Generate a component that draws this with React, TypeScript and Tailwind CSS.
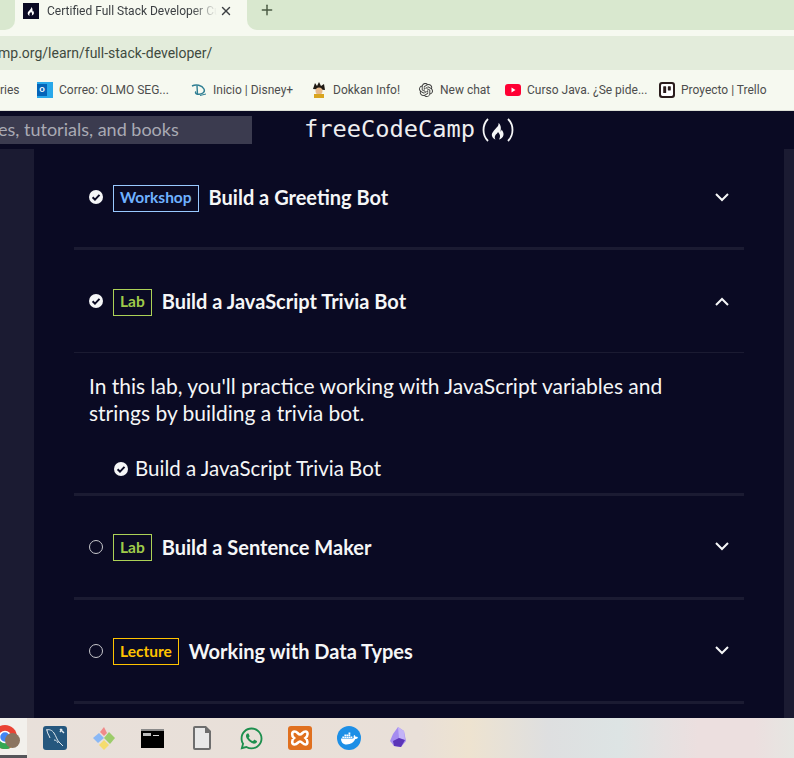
import { FaDocker, FaWhatsapp } from 'react-icons/fa'
import { SiOpenai, SiTrello } from 'react-icons/si'
import { X, Plus } from 'lucide-react'

const lato = "font-['Lato','Noto_Sans',sans-serif]"
const chrome = "font-['Roboto','Noto_Sans',sans-serif]"

function CheckCircle({ size = 14 }: { size?: number }) {
  return (
    <svg width={size} height={size} viewBox="0 0 14 14" className="shrink-0">
      <circle cx="7" cy="7" r="7" fill="#f5f6f7" />
      <path d="M3.6 7.2 6 9.6l4.5-4.7" fill="none" stroke="#0a0a23" strokeWidth="2" />
    </svg>
  )
}

function EmptyCircle() {
  return (
    <svg width="14" height="14" viewBox="0 0 14 14" className="shrink-0">
      <circle cx="7" cy="7" r="6.5" fill="none" stroke="#c8c8cc" strokeWidth="1" />
    </svg>
  )
}

function Chevron({ up }: { up?: boolean }) {
  return (
    <svg width="14" height="9" viewBox="0 0 14 9" className="shrink-0">
      <path d={up ? 'M1 8 7 2l6 6' : 'M1 1l6 6 6-6'} fill="none" stroke="#f5f6f7" strokeWidth="2" />
    </svg>
  )
}

function Badge({ label, tone }: { label: string; tone: 'blue' | 'green' | 'yellow' }) {
  const tones = {
    blue: 'border-[#99c9ff] text-[#6fb1ff]',
    green: 'border-[#acd157] text-[#9fcb4a]',
    yellow: 'border-[#ffc300] text-[#ffc300]',
  }
  return (
    <span className={`mt-[2px] flex h-[27px] items-center border px-[6px] text-[15.5px] font-bold ${tones[tone]}`}>
      {label}
    </span>
  )
}

function Row({
  title,
  label,
  tone,
  done,
  up,
  className,
}: {
  title: string
  label: string
  tone: 'blue' | 'green' | 'yellow'
  done?: boolean
  up?: boolean
  className: string
}) {
  return (
    <div className={`flex items-center px-[15px] ${className}`}>
      {done ? <CheckCircle /> : <EmptyCircle />}
      <span className="ml-[10px]">
        <Badge label={label} tone={tone} />
      </span>
      <span className="ml-[10px] text-[20px] font-bold text-[#f5f6f7]">{title}</span>
      <span className="ml-auto flex">
        <Chevron up={up} />
      </span>
    </div>
  )
}

function Bookmark({ icon, text, width }: { icon: React.ReactNode; text: string; width: string }) {
  return (
    <div className={`flex shrink-0 items-center gap-[6px] ${width}`}>
      <span className="flex h-4 w-4 shrink-0 items-center justify-center">{icon}</span>
      <span className="whitespace-nowrap text-[12px] text-[#4d4d4d]">{text}</span>
    </div>
  )
}

function Divider() {
  return <div className="h-[3px] bg-[#1b1b32]" />
}

const flamePath =
  'M7.500 0C8 3 5.500 4.500 3 7.500 1 10 .5 11 1 13c.5 2 2 3 3.500 3.500-1-1.500-1-3 0-4.500.8-1 1.800-1.500 2.500-3 1 1.200 2 2.500 2 4 0 1.500-.5 2.500-1 3.500 2-.5 4-2 4.500-4.500.3-2-.7-4-2-5.500 0 1-.4 1.800-1 2.200C10.500 4 9.500 1.500 7.500 0z'

function Flame({ className }: { className?: string }) {
  return (
    <svg viewBox="0 0 14 17" className={className} fill="currentColor">
      <path d={flamePath} />
    </svg>
  )
}

function LogoMark() {
  return (
    <svg viewBox="0 0 42 24" className="h-[24px] w-[42px] shrink-0 text-[#f5f6f7]" fill="none">
      <path d="M13 1C7 7 7 17 13 23" stroke="currentColor" strokeWidth="1.800" />
      <path d="M33 1c6 6 6 16 0 22" stroke="currentColor" strokeWidth="1.800" />
      <path transform="translate(16 5)" fill="currentColor" d={flamePath} />
    </svg>
  )
}

export default function App() {
  return (
    <div className="flex h-[758px] w-[794px] flex-col overflow-hidden bg-[#0a0a23]">
      {/* tab strip */}
      <div className={`flex h-[30px] shrink-0 bg-[#f6f9f0] ${chrome}`}>
        <div className="w-[15px] shrink-0 rounded-br-[10px] bg-[#d9e8cf]" />
        <div className="flex w-[232px] shrink-0 items-center pb-[8px] pl-[8px]">
          <span className="flex h-4 w-4 shrink-0 items-center justify-center bg-[#0a0a23] text-white">
            <Flame className="h-[9px] w-[8px]" />
          </span>
          <span className="ml-[8px] w-[170px] overflow-hidden whitespace-nowrap text-[12px] text-[#3c4043] [mask-image:linear-gradient(to_right,black_85%,transparent)]">
            Certified Full Stack Developer Curriculum
          </span>
          <X size={14} strokeWidth={2.4} className="ml-[2px] text-[#3c4043]" />
        </div>
        <div className="flex flex-1 rounded-bl-[10px] bg-[#d9e8cf]">
          <Plus size={16} strokeWidth={2.2} className="ml-[12px] mt-[2px] text-[#4a5a44]" />
        </div>
      </div>

      {/* address bar */}
      <div className="flex h-[40px] shrink-0 items-end bg-[#f6f9f0]">
        <div className={`flex h-[34px] w-full items-center overflow-hidden bg-[#e3ecdb] ${chrome}`}>
          <span className="ml-[-2px] whitespace-nowrap text-[14px] text-[#3f4a3f]">mp.org/learn/full-stack-developer/</span>
        </div>
      </div>

      {/* bookmarks */}
      <div className={`flex h-[41px] shrink-0 items-center border-b border-[#dcdfd6] bg-[#f6f9f0] ${chrome}`}>
        <span className="w-[37px] shrink-0 whitespace-nowrap text-[12px] text-[#4d4d4d]">ries</span>
        <Bookmark
          width="w-[154px]"
          text="Correo: OLMO SEG..."
          icon={
            <span className="flex h-4 w-4 items-center justify-start bg-[#28a8ea]">
              <span className="flex h-3 w-[10px] items-center justify-center bg-[#0364b8] text-[8px] font-bold text-white">O</span>
            </span>
          }
        />
        <Bookmark
          width="w-[120px]"
          text="Inicio | Disney+"
          icon={
            <svg viewBox="0 0 16 16" className="h-4 w-4" fill="none" stroke="#2f7f93" strokeWidth="1.4">
              <path d="M1 4c4-2 10-1 12 3 1.500 3-2 6-7 5-1.500-.3-2-1.500-1-2.500" />
              <path d="M6 3.500 6.500 13" />
              <path d="M9 13.500 15 12" strokeWidth="1" />
            </svg>
          }
        />
        <Bookmark
          width="w-[107px]"
          text="Dokkan Info!"
          icon={
            <svg viewBox="0 0 16 16" className="h-4 w-4">
              <path d="M2 7 4 1l2 3 2-4 2 4 3-2 1 6z" fill="#1f1a14" />
              <circle cx="8" cy="9" r="3.500" fill="#e7b98c" />
              <rect x="3" y="12" width="10" height="4" fill="#d9a520" />
            </svg>
          }
        />
        <Bookmark width="w-[87px]" text="New chat" icon={<SiOpenai size={14} className="text-[#3a3a3a]" />} />
        <Bookmark
          width="w-[154px]"
          text="Curso Java. ¿Se pide..."
          icon={
            <svg viewBox="0 0 16 12" className="w-4">
              <rect width="16" height="12" rx="3" fill="#ff0033" />
              <path d="M6.500 3.500v5l4-2.500z" fill="#fff" />
            </svg>
          }
        />
        <Bookmark
          width="w-[110px]"
          text="Proyecto | Trello"
          icon={
            <span className="flex h-4 w-4 items-center justify-center rounded-[3px] bg-[#2b1d1d]">
              <SiTrello size={12} className="text-white" />
            </span>
          }
        />
      </div>

      {/* site nav */}
      <div className={`flex h-[38px] shrink-0 items-center ${lato}`}>
        <div className="flex h-[28px] w-[252px] shrink-0 items-center overflow-hidden bg-[#3b3b4f] pb-[2px]">
          <span className="ml-[-2px] whitespace-nowrap text-[18px] text-[#a9aab4]">es, tutorials, and books</span>
        </div>
        <div className="ml-[52px] flex items-center font-['DejaVu_Sans_Mono',monospace] text-[23.700px] leading-none text-[#eeeef0]">
          freeCodeCamp
          <LogoMark />
        </div>
      </div>

      {/* page */}
      <div className={`flex min-h-0 flex-1 overflow-hidden ${lato}`}>
        <div className="w-[34px] shrink-0 bg-[#1b1b32]" />
        <div className="min-w-0 flex-1 bg-[#0a0a23] px-[40px]">
          <Row title="Build a Greeting Bot" label="Workshop" tone="blue" done className="h-[98px] pb-[2px]" />
          <Divider />
          <Row title="Build a JavaScript Trivia Bot" label="Lab" tone="green" done up className="h-[103px] border-b border-[#1b1b32]" />
          <div className="h-[140px] px-[15px] pt-[19px]">
            <p className="text-[21px] leading-[27px] text-[#f5f6f7]">
              In this lab, you'll practice working with JavaScript variables and
              <br />
              strings by building a trivia bot.
            </p>
            <div className="ml-[25px] mt-[29px] flex items-center gap-[7px] text-[20.5px] leading-[27px] text-[#f5f6f7]">
              <CheckCircle />
              Build a JavaScript Trivia Bot
            </div>
          </div>
          <Divider />
          <Row title="Build a Sentence Maker" label="Lab" tone="green" className="h-[101px]" />
          <Divider />
          <Row title="Working with Data Types" label="Lecture" tone="yellow" className="h-[101px]" />
          <Divider />
        </div>
        <div className="w-[10px] shrink-0 bg-[#1b1b32]" />
      </div>

      {/* taskbar */}
      <div className="flex h-[40px] shrink-0 items-center bg-[linear-gradient(to_right,#e8e0da_0%,#e9e0d8_53%,#eee3d0_59%,#dedfe0_69%,#dde4e4_78%,#ecdfdf_88%,#ecdfdf_95%,#e6e6e2_100%)]">
        <div className="relative flex h-full w-[27px] shrink-0 items-center overflow-hidden border-b-[3px] border-[#55555a] bg-[#f2f0ec]">
          <svg viewBox="0 0 24 24" className="ml-[-7px] h-[24px] w-[24px] shrink-0">
            <circle cx="12" cy="12" r="12" fill="#ea4335" />
            <path d="M12 12 1.600 18 A12 12 0 0 0 17 23z" fill="#34a853" />
            <path d="M12 12 24 12A12 12 0 0 1 17 23z" fill="#fbbc05" />
            <circle cx="12" cy="12" r="5.500" fill="#4285f4" stroke="#fff" strokeWidth="1.500" />
          </svg>
          <span className="absolute left-[5px] top-[15px] h-[15px] w-[15px] rounded-full bg-[#8a7460]" />
        </div>
        <div className="ml-[16px] flex h-6 w-6 shrink-0 items-center justify-center rounded-[3px] bg-[#25577e]">
          <svg viewBox="0 0 24 24" className="h-6 w-6" fill="none" stroke="#dfe8ee" strokeWidth="1">
            <path d="M3 4c3-1 6 0 8 3s3 7 5 9c1 1 3 3 4 4" />
            <path d="M4 4c0 3 2 5 3 8M11 14c2 0 3 1 4 3" />
            <path d="m17 3 4 4M19 3l-2 3" strokeWidth="1.400" />
          </svg>
        </div>
        <svg viewBox="0 0 24 24" className="ml-[25px] h-6 w-6 shrink-0">
          <path d="M12 1 8 6l4 4 3-3z" fill="#f08a8a" />
          <path d="M7 7 1 12l5 5 6-5z" fill="#8ab8f5" />
          <path d="M17 6l6 6-5 6-6-6z" fill="#9ccc6a" />
          <path d="M12 14l5 5-5 5-5-5z" fill="#f5dc6e" />
        </svg>
        <div className="ml-[25px] h-[19px] w-[23px] shrink-0 border-t-2 border-[#8a8a8a] bg-black pl-[2px] pt-[2px]">
          <div className="flex items-end gap-[2px]">
            <span className="h-[3px] w-[8px] bg-[#bcbcbc]" />
            <span className="h-[1px] w-[6px] bg-[#d6d6d6]" />
          </div>
        </div>
        <svg viewBox="0 0 20 24" className="ml-[28px] h-6 w-5 shrink-0">
          <path d="M1 2a2 2 0 0 1 2-2h11l5 5v17a2 2 0 0 1-2 2H3a2 2 0 0 1-2-2z" fill="#6e6e6e" />
          <path d="M3 2h10v5h4v15H3z" fill="#e8e8e8" />
        </svg>
        <FaWhatsapp size={25} className="ml-[27px] shrink-0 text-[#1d8f4e]" />
        <div className="ml-[24px] flex h-6 w-6 shrink-0 items-center justify-center rounded-[3px] bg-[#e0701f]">
          <svg viewBox="0 0 24 24" className="h-6 w-6" fill="none" stroke="#fff" strokeWidth="2.600">
            <path d="M6.500 5.500c3 0 3.500 3 5.500 3s2.500-3 5.500-3 2.500 4.500 0 6.500c2.500 2 2.500 6.500 0 6.500s-3.500-3-5.500-3-2.500 3-5.500 3-3-4.500-.5-6.500c-2.500-2-2.500-6.500.5-6.500z" />
          </svg>
        </div>
        <div className="ml-[25px] flex h-6 w-6 shrink-0 items-center justify-center rounded-full bg-[#1d8fe6]">
          <FaDocker size={17} className="text-white" />
        </div>
        <svg viewBox="0 0 16 24" className="ml-[29px] h-6 w-4 shrink-0">
          <path d="M8 1 14 5l2 10-5 6-7-1-4-5 3-7z" fill="#a58cf0" />
          <path d="M8 1 14 5l1 9-6-2z" fill="#c3b3f7" />
          <path d="M3 15 9 12l6 2-4 7-7-1z" fill="#5b35b8" />
        </svg>
      </div>
    </div>
  )
}
